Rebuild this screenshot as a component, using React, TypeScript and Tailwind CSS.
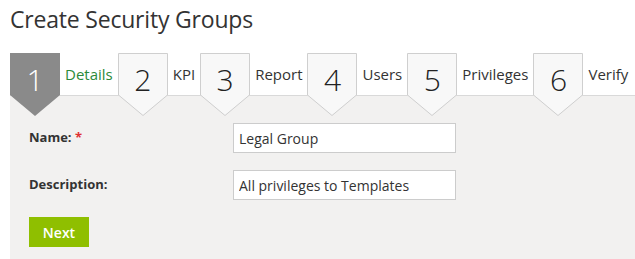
import React from "react";

const steps = [
    { n: "1", label: "Details" },
    { n: "2", label: "KPI" },
    { n: "3", label: "Report" },
    { n: "4", label: "Users" },
    { n: "5", label: "Privileges" },
    { n: "6", label: "Verify" },
];

function StepBadge({ n, active }: { n: string; active: boolean }) {
    return (
        <div className="relative w-[50px] h-[42px] shrink-0">
            <svg width="50" height="64" viewBox="0 0 50 64" className="absolute left-0 top-0 overflow-visible">
                {active ? (
                    <polygon points="0,0 50,0 50,42 25,63 0,42" fill="#8a8a8a" />
                ) : (
                    <polygon points="0.5,0.5 49.5,0.5 49.5,42 25,62.5 0.5,42" fill="#f8f8f8" stroke="#cfcfcf" />
                )}
            </svg>
            <span
                className={
                    "relative flex h-[42px] items-center justify-center pt-[10px] text-[30px] font-light " +
                    (active ? "text-white" : "text-[#222]")
                }
            >
                {n}
            </span>
        </div>
    );
}

export default function App() {
    return (
        <div className="w-[635px] h-[259px] bg-white overflow-hidden font-['Open_Sans',sans-serif] text-[#333]">
            <div className="pl-[10px]">
                <h1 className="h-[53px] pt-[4px] text-[23px] leading-[30px] text-[#333] tracking-[-0.2px]">
                    Create Security Groups
                </h1>

                <div className="relative z-10 flex h-[42px] items-center">
                    {steps.map((s, i) => (
                        <React.Fragment key={s.n}>
                            <StepBadge n={s.n} active={i === 0} />
                            <span
                                className={
                                    "px-[5px] text-[15px] " +
                                    (i === 0 ? "text-[#2c8a3a]" : "text-[#333]")
                                }
                            >
                                {s.label}
                            </span>
                        </React.Fragment>
                    ))}
                </div>

                <div className="h-[164px] border-t border-[#d9d9d9] bg-[#f2f1f0] pl-[19px] pt-[27px]">
                    <form className="flex flex-col gap-[17px]">
                        <div className="flex items-center">
                            <label className="w-[204px] text-[13px] font-bold text-[#333]">
                                Name: <span className="text-[#e03030]">*</span>
                            </label>
                            <input
                                defaultValue="Legal Group"
                                className="h-[30px] w-[223px] border border-[#cccccc] bg-white px-[5px] text-[14px] text-[#333] outline-none"
                            />
                        </div>
                        <div className="flex items-center">
                            <label className="w-[204px] text-[13px] font-bold text-[#333]">Description:</label>
                            <input
                                defaultValue="All privileges to Templates"
                                className="h-[30px] w-[223px] border border-[#cccccc] bg-white px-[5px] text-[14px] text-[#333] outline-none"
                            />
                        </div>
                        <div>
                            <button
                                type="button"
                                className="h-[30px] w-[60px] bg-[#8fbf00] text-[14px] font-semibold text-white"
                            >
                                Next
                            </button>
                        </div>
                    </form>
                </div>
            </div>
        </div>
    );
}
